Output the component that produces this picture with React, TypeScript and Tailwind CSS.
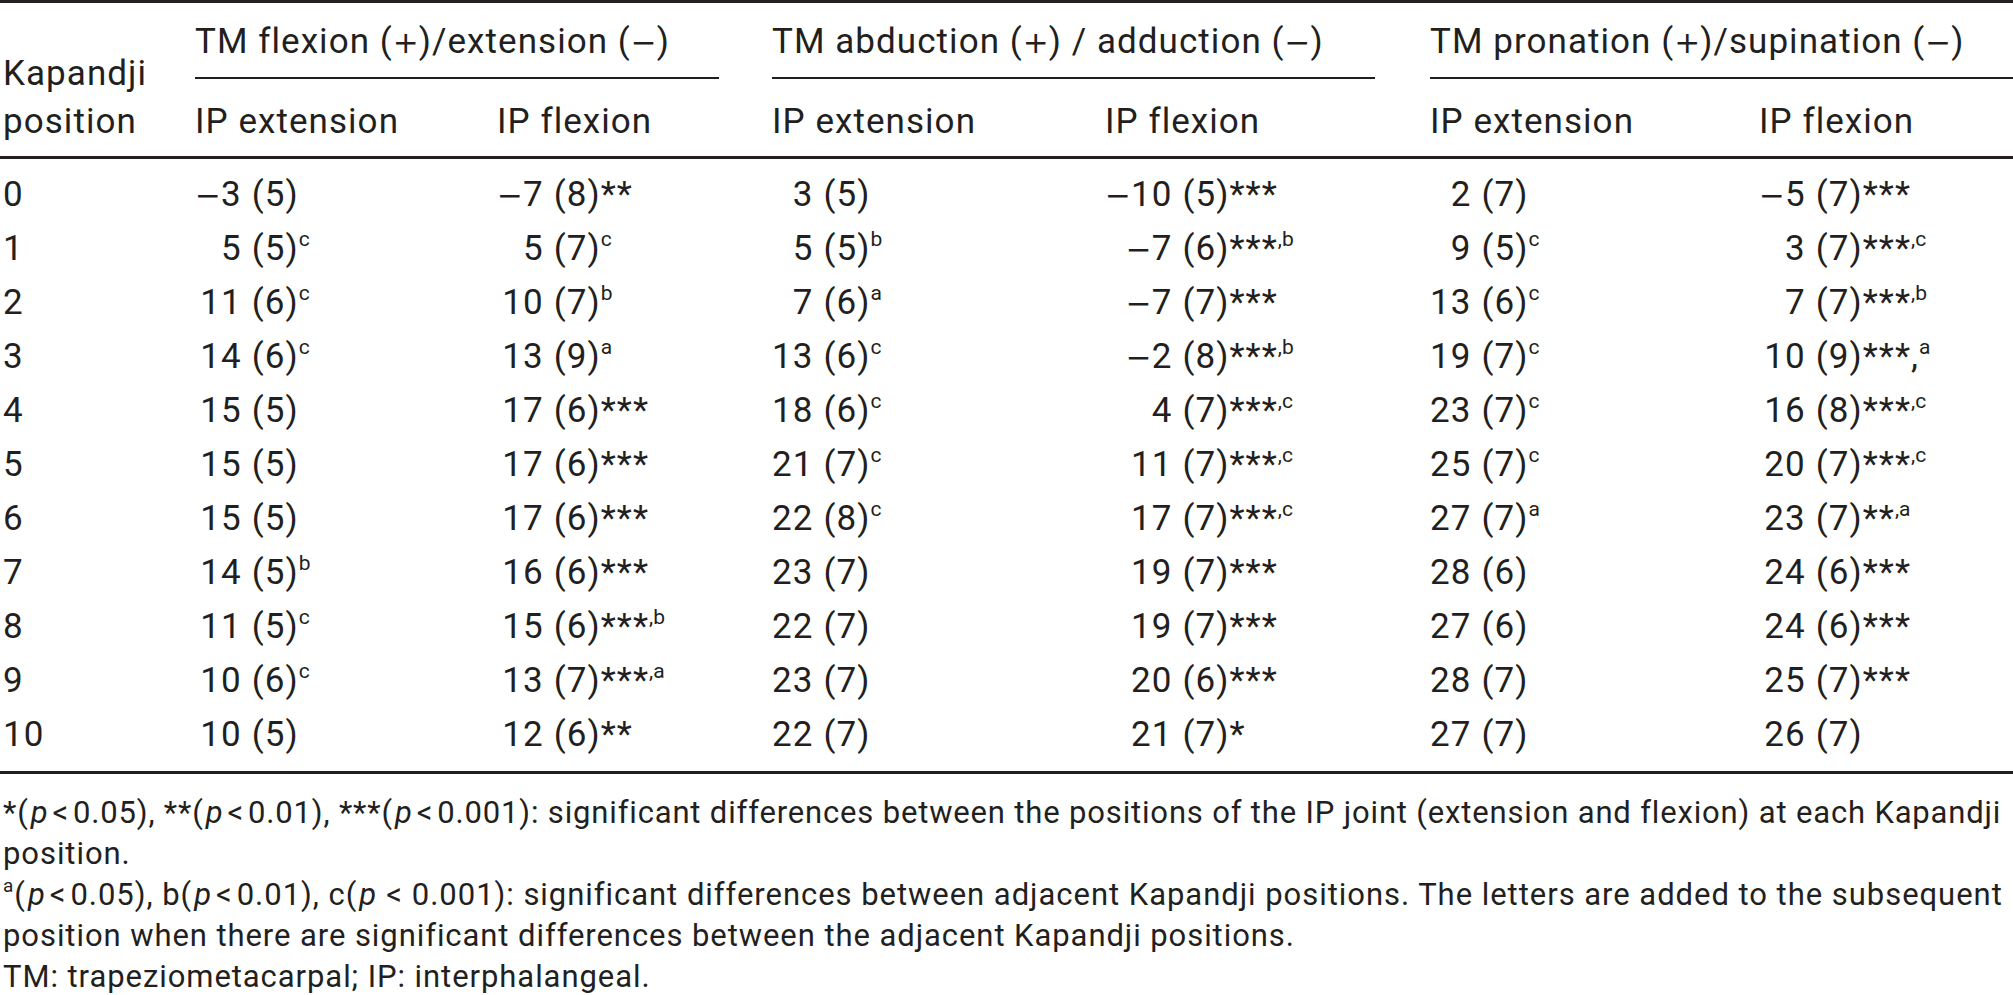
import React from "react";

type Cell = { n: string; sd: string; sup?: string };

// widest value in each column, used to right-align the numbers
const WIDEST = ["−3", "−7", "88", "−10", "88", "−5"];

const GROUPS = [
  { title: "TM flexion (+)/extension (−)", rule: "mr-[53px]" },
  { title: "TM abduction (+) / adduction (−)", rule: "mr-[55px]" },
  { title: "TM pronation (+)/supination (−)", rule: "" },
];

const RAW: string[][] = [
  ["−3 (5)", "−7 (8)**", "3 (5)", "−10 (5)***", "2 (7)", "−5 (7)***"],
  ["5 (5)|c", "5 (7)|c", "5 (5)|b", "−7 (6)***|,b", "9 (5)|c", "3 (7)***|,c"],
  ["11 (6)|c", "10 (7)|b", "7 (6)|a", "−7 (7)***", "13 (6)|c", "7 (7)***|,b"],
  ["14 (6)|c", "13 (9)|a", "13 (6)|c", "−2 (8)***|,b", "19 (7)|c", "10 (9)***,|a"],
  ["15 (5)", "17 (6)***", "18 (6)|c", "4 (7)***|,c", "23 (7)|c", "16 (8)***|,c"],
  ["15 (5)", "17 (6)***", "21 (7)|c", "11 (7)***|,c", "25 (7)|c", "20 (7)***|,c"],
  ["15 (5)", "17 (6)***", "22 (8)|c", "17 (7)***|,c", "27 (7)|a", "23 (7)**|,a"],
  ["14 (5)|b", "16 (6)***", "23 (7)", "19 (7)***", "28 (6)", "24 (6)***"],
  ["11 (5)|c", "15 (6)***|,b", "22 (7)", "19 (7)***", "27 (6)", "24 (6)***"],
  ["10 (6)|c", "13 (7)***|,a", "23 (7)", "20 (6)***", "28 (7)", "25 (7)***"],
  ["10 (5)", "12 (6)**", "22 (7)", "21 (7)*", "27 (7)", "26 (7)"],
];

function parse(raw: string): Cell {
  const [main, sup] = raw.split("|");
  const space = main.indexOf(" ");
  return { n: main.slice(0, space), sd: main.slice(space + 1), sup };
}

// the print font has long math signs; DejaVu's come closest
function Sym({ text }: { text: string }) {
  return (
    <>
      {text.split(/([−+])/).map((part, i) =>
        part === "−" || part === "+" ? (
          <span key={i} className="font-['DejaVu_Sans',sans-serif] text-[31px] tracking-normal">
            {part}
          </span>
        ) : (
          part
        ),
      )}
    </>
  );
}

const GRID = "grid grid-cols-[195px_302px_275px_333px_325px_329px_254px]";

function ValueCell({ cell, widest }: { cell: Cell; widest: string }) {
  return (
    <div className="flex items-baseline whitespace-nowrap">
      <span className="inline-grid justify-items-end">
        <span className="invisible col-start-1 row-start-1">
          <Sym text={widest} />
        </span>
        <span className="col-start-1 row-start-1">
          <Sym text={cell.n} />
        </span>
      </span>
      <span className="ml-[10px]">{cell.sd}</span>
      {cell.sup && <sup className="text-[21px] top-[-14px] tracking-normal">{cell.sup}</sup>}
    </div>
  );
}

// "p < value" as set in the footnotes
function PLess({ value, wide }: { value: string; wide?: boolean }) {
  return (
    <>
      <i className="pl-[2px]">p</i>
      <span className={wide ? "px-[9px]" : "px-[4px]"}>&lt;</span>
      {value}
    </>
  );
}

export default function App() {
  return (
    <div className="h-[995px] w-[2013px] overflow-hidden bg-white font-[Roboto,sans-serif] text-[35px] leading-[48px] tracking-[0.03em] text-[#231f20]">
      <div className="border-t-[3px] border-[#231f20]">
        <div className={`${GRID} grid-rows-[76px_77px]`}>
          <div className="row-span-2 flex flex-col justify-end pb-[10px] pl-[3px]">
            <span>Kapandji</span>
            <span>position</span>
          </div>
          {GROUPS.map((g) => (
            <div
              key={g.title}
              className={`col-span-2 flex items-center border-b-2 border-[#231f20] pt-[4px] whitespace-nowrap ${g.rule}`}
            >
              <span>
                <Sym text={g.title} />
              </span>
            </div>
          ))}
          {GROUPS.map((g) => (
            <React.Fragment key={g.title}>
              <div className="flex items-center pt-[8px]">IP extension</div>
              <div className="flex items-center pt-[8px]">IP flexion</div>
            </React.Fragment>
          ))}
        </div>
      </div>

      <div className="border-y-[3px] border-[#231f20] pt-[9px] pb-[9px]">
        {RAW.map((row, i) => (
          <div key={i} className={`${GRID} h-[54px] items-center`}>
            <div className="pl-[3px]">{i}</div>
            {row.map((raw, c) => (
              <ValueCell key={c} cell={parse(raw)} widest={WIDEST[c]} />
            ))}
          </div>
        ))}
      </div>

      <div className="pt-[18px] pl-[3px] text-[31px] leading-[41px] whitespace-nowrap">
        <p className="tracking-[0.027em]">
          *(<PLess value="0.05" />), **(<PLess value="0.01" />), ***(<PLess value="0.001" />): significant
          differences between the positions of the IP joint (extension and flexion) at each Kapandji
        </p>
        <p className="tracking-[0.03em]">position.</p>
        <p className="tracking-[0.031em]">
          <sup className="text-[19px] top-[-13px]">a</sup>(<PLess value="0.05" />), b(<PLess value="0.01" />), c(
          <PLess value="0.001" wide />
          ): significant differences between adjacent Kapandji positions. The letters are added to the
          subsequent
        </p>
        <p className="tracking-[0.03em]">
          position when there are significant differences between the adjacent Kapandji positions.
        </p>
        <p className="tracking-[0.03em]">TM: trapeziometacarpal; IP: interphalangeal.</p>
      </div>
    </div>
  );
}
